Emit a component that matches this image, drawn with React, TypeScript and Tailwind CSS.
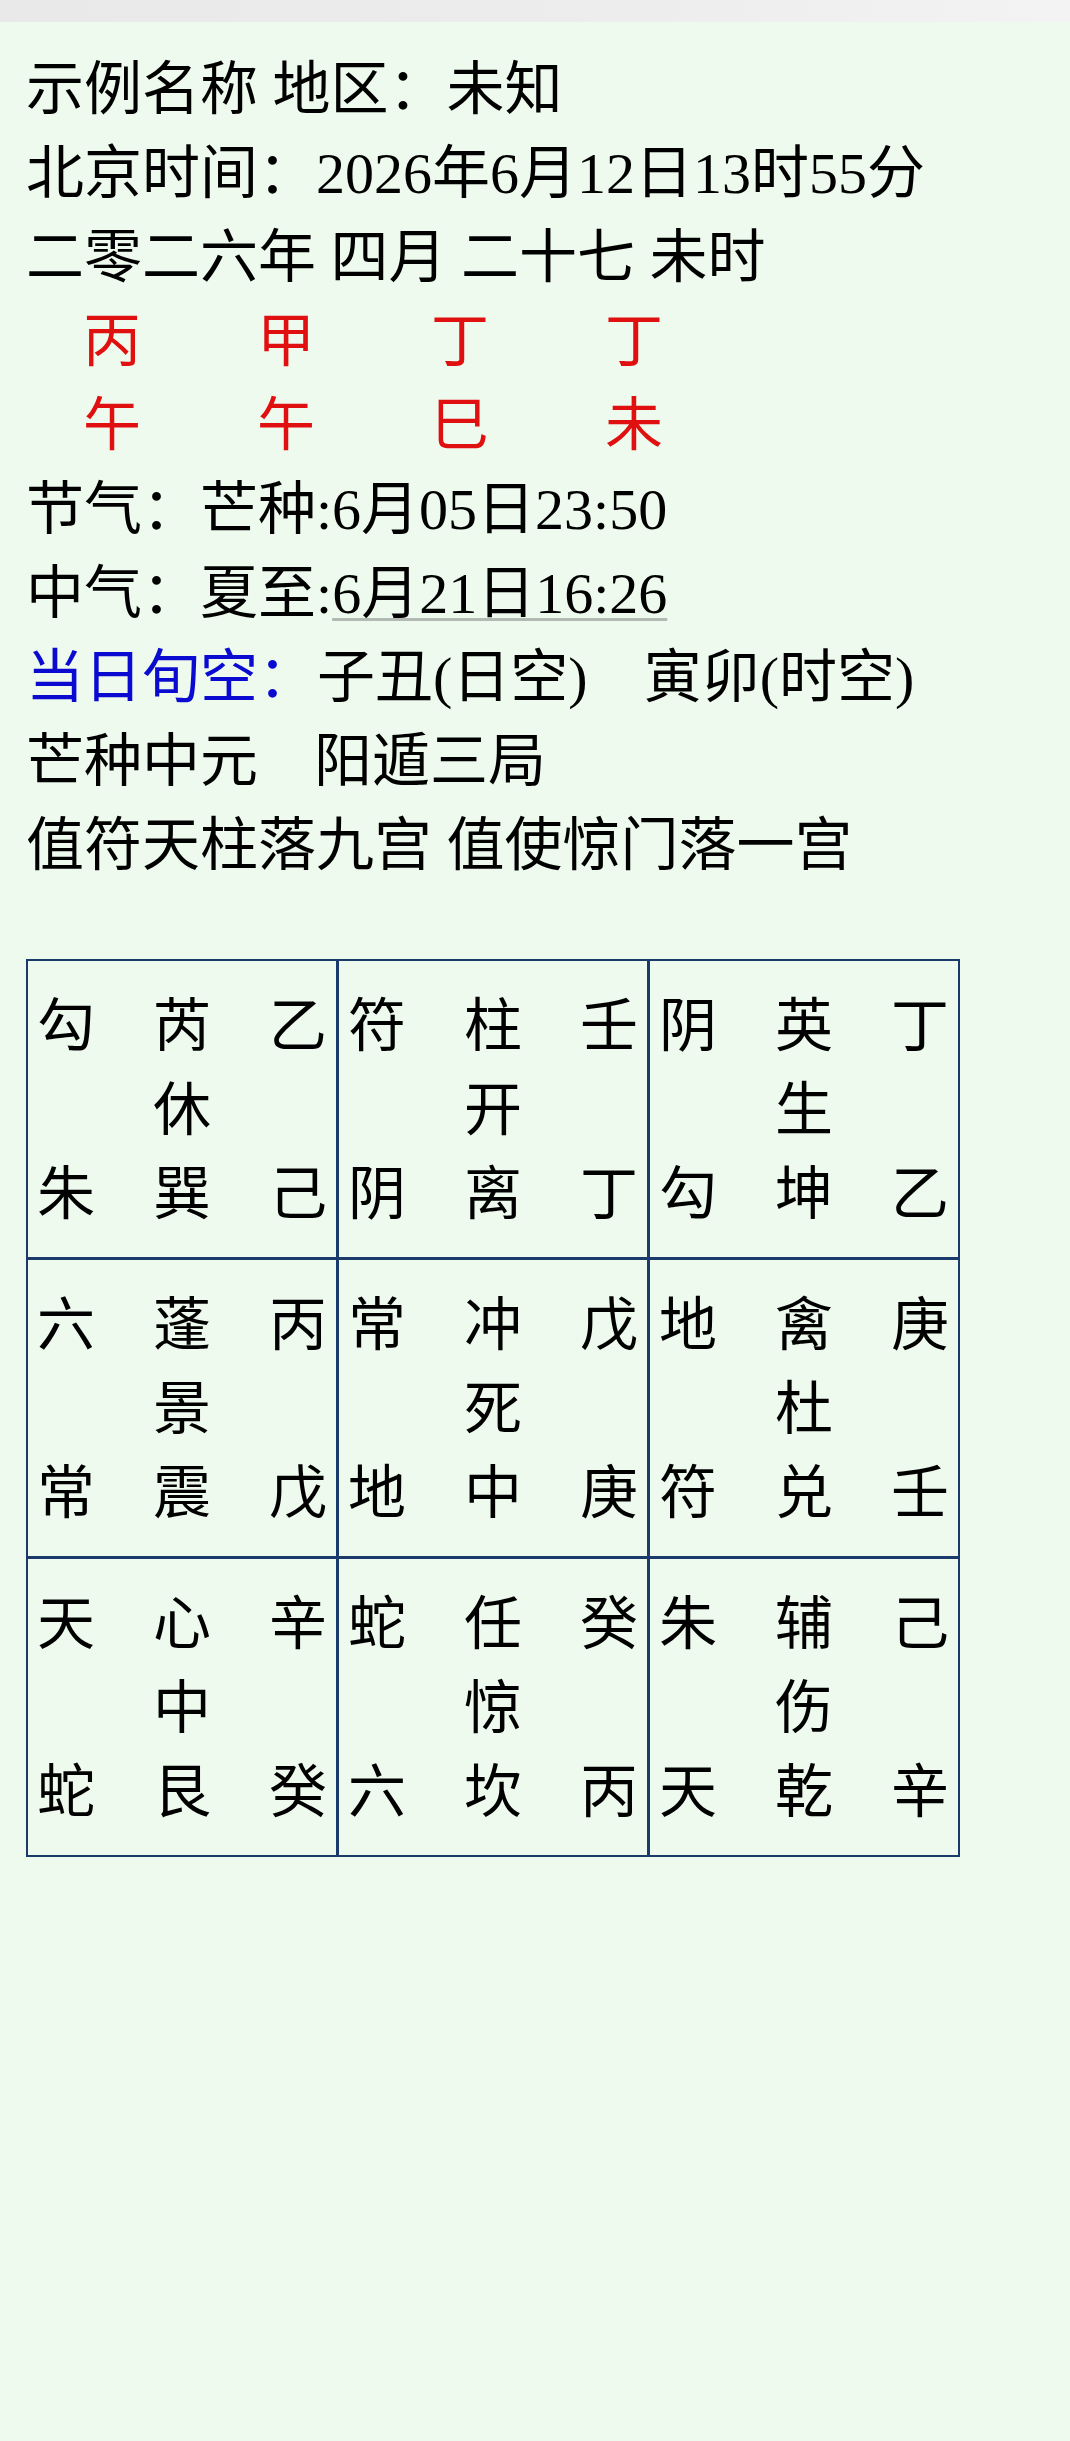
import React from "react";

type Cell = string[][];

const grid: Cell[] = [
  [["勾", "芮", "乙"], ["", "休", ""], ["朱", "巽", "己"]],
  [["符", "柱", "壬"], ["", "开", ""], ["阴", "离", "丁"]],
  [["阴", "英", "丁"], ["", "生", ""], ["勾", "坤", "乙"]],
  [["六", "蓬", "丙"], ["", "景", ""], ["常", "震", "戊"]],
  [["常", "冲", "戊"], ["", "死", ""], ["地", "中", "庚"]],
  [["地", "禽", "庚"], ["", "杜", ""], ["符", "兑", "壬"]],
  [["天", "心", "辛"], ["", "中", ""], ["蛇", "艮", "癸"]],
  [["蛇", "任", "癸"], ["", "惊", ""], ["六", "坎", "丙"]],
  [["朱", "辅", "己"], ["", "伤", ""], ["天", "乾", "辛"]],
];

const stems = ["丙", "甲", "丁", "丁"];
const branches = ["午", "午", "巳", "未"];

const Palace: React.FC<{ cell: Cell }> = ({ cell }) => (
  <div className="bg-[#edfaed] h-[296px] px-[9px] pt-[24px] pb-[20px]">
    {cell.map((row, i) => (
      <div key={i} className="grid grid-cols-3 h-[84px] items-center">
        <span className="text-left">{row[0]}</span>
        <span className="text-center">{row[1]}</span>
        <span className="text-right">{row[2]}</span>
      </div>
    ))}
  </div>
);

const App: React.FC = () => {
  return (
    <div className="min-h-[2441px] w-full bg-[#edfaed] text-black font-['Liberation_Serif','Noto_Sans_CJK_SC',serif] text-[58px] leading-[84px]">
      {/* top bar */}
      <div className="h-[22px] bg-gradient-to-r from-[#e9e9e9] via-[#ececec] to-[#f3f3f3]"></div>

      <div className="pl-[26px] pt-[26px]">
        <div>示例名称 地区：未知</div>
        <div>北京时间：2026年6月12日13时55分</div>
        <div>二零二六年 四月 二十七 未时</div>

        {/* 四柱 */}
        <div className="flex pl-[57px] text-[#e01010]">
          {stems.map((s, i) => (
            <span key={i} className="w-[174px]">{s}</span>
          ))}
        </div>
        <div className="flex pl-[57px] text-[#e01010]">
          {branches.map((s, i) => (
            <span key={i} className="w-[174px]">{s}</span>
          ))}
        </div>

        <div>节气：芒种:6月05日23:50</div>
        <div>
          中气：夏至:
          <span className="underline decoration-[#b3bab3] decoration-[3px] underline-offset-[5px]">6月21日16:26</span>
        </div>
        <div>
          <span className="text-[#0a0ad0]">当日旬空：</span>
          <span className="ml-[1px]">子丑(日空)</span>
          <span className="ml-[56px]">寅卯(时空)</span>
        </div>
        <div>
          <span>芒种中元</span>
          <span className="ml-[56px]">阳遁三局</span>
        </div>
        <div>值符天柱落九宫 值使惊门落一宫</div>

        {/* 九宫盘 */}
        <div className="mt-[71px] w-[934px] grid grid-cols-3 gap-[3px] p-[2px] bg-[#1b3a6c]">
          {grid.map((c, i) => (
            <Palace key={i} cell={c} />
          ))}
        </div>
      </div>
    </div>
  );
};

export default App;
